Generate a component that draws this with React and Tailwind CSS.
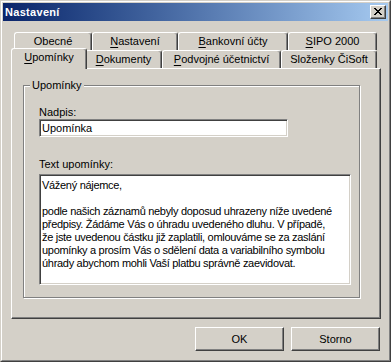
import clsx from 'clsx';

const backRow = [
  { label: 'Obecné', key: null, w: 'w-[78px]' },
  { label: 'Nastavení', key: 0, w: 'w-[86px]' },
  { label: 'Bankovní účty', key: 0, w: 'w-[110px]' },
  { label: 'SIPO 2000', key: 0, w: 'w-[89px]' },
];

const frontRow = [
  { label: 'Upomínky', key: 0, w: 'w-[76px]', selected: true },
  { label: 'Dokumenty', key: 0, w: 'w-[77px]' },
  { label: 'Podvojné účetnictví', key: 0, w: 'w-[119px]' },
  { label: 'Složenky ČiSoft', key: null, w: 'w-[96px]' },
];

const lines = [
  'Vážený nájemce,',
  '',
  'podle našich záznamů nebyly doposud uhrazeny níže uvedené',
  'předpisy. Žádáme Vás o úhradu uvedeného dluhu. V případě,',
  'že jste uvedenou částku již zaplatili, omlouváme se za zaslání',
  'upomínky a prosím Vás o sdělení data a variabilního symbolu',
  'úhrady abychom mohli Vaší platbu správně zaevidovat.',
];

// label with underlined access key
function Label({ text, k }) {
  if (k === null || k === undefined) return <span>{text}</span>;
  return (
    <span>
      {text.slice(0, k)}
      <span className="underline underline-offset-[2px]">{text[k]}</span>
      {text.slice(k + 1)}
    </span>
  );
}

function Tab({ tab }) {
  return (
    <div
      className={clsx(
        'flex shrink-0 items-center justify-center rounded-t-[3px] border-t border-l border-r border-t-white border-l-white border-r-[#404040] bg-[#d4d0c8] leading-[13px] shadow-[inset_-1px_0_0_#808080]',
        tab.w,
        tab.selected ? 'relative z-10 -mx-[2px] -mt-[2px] h-[21px] pb-[3px]' : 'h-[18px]'
      )}
    >
      <Label text={tab.label} k={tab.key} />
    </div>
  );
}

function Button({ children }) {
  return (
    <button className="flex h-[24px] w-[89px] items-center justify-center border border-t-white border-l-white border-r-[#404040] border-b-[#404040] bg-[#d4d0c8] leading-[13px] shadow-[inset_-1px_-1px_0_#808080]">
      {children}
    </button>
  );
}

export default function App() {
  return (
    <div className="h-[362px] w-[391px] bg-[#d4d0c8] font-['Liberation_Sans',Arial,sans-serif] text-[11px] text-black">
      {/* window frame */}
      <div className="h-full border border-t-[#d4d0c8] border-l-[#d4d0c8] border-r-[#404040] border-b-[#404040]">
        <div className="flex h-full flex-col border border-t-white border-l-white border-r-[#808080] border-b-[#808080] p-[1px]">
          {/* title bar */}
          <div className="flex h-[18px] shrink-0 items-center bg-linear-to-r from-[#0a246a] to-[#a6caf0] pl-[2px] pr-[2px]">
            <span className="flex-1 text-[11px] font-bold leading-[18px] tracking-[0.3px] text-white">Nastavení</span>
            <div className="flex h-[14px] w-[16px] items-center justify-center border border-t-white border-l-white border-r-[#404040] border-b-[#404040] bg-[#d4d0c8] shadow-[inset_-1px_-1px_0_#808080]">
              <svg width="8" height="7" viewBox="0 0 8 7" shapeRendering="crispEdges" className="-mt-[1px]">
                <path
                  fill="#000"
                  d="M0 0h2v1H0zM6 0h2v1H6zM1 1h2v1H1zM5 1h2v1H5zM2 2h4v1H2zM3 3h2v1H3zM2 4h4v1H2zM1 5h2v1H1zM5 5h2v1H5zM0 6h2v1H0zM6 6h2v1H6z"
                />
              </svg>
            </div>
          </div>

          {/* body */}
          <div className="flex flex-1 flex-col pl-[8px] pr-[7px] pt-[11px]">
            <div className="flex h-[36px] flex-col">
              <div className="flex h-[18px] pl-[3px]">
                {backRow.map((t) => (
                  <Tab key={t.label} tab={t} />
                ))}
              </div>
              <div className="flex h-[18px] items-start pl-[2px]">
                {frontRow.map((t) => (
                  <Tab key={t.label} tab={t} />
                ))}
              </div>
            </div>

            {/* tab panel */}
            <div className="h-[251px] w-[370px] border-t border-l border-r border-b border-t-white border-l-white border-r-[#404040] border-b-[#404040] pl-[11px] pt-[16px] shadow-[inset_-1px_-1px_0_#808080]">
              <div className="relative h-[213px] w-[337px] border border-[#808080] pl-[15px] pt-[20px] shadow-[inset_1px_1px_0_#fff,1px_1px_0_#fff]">
                <span className="absolute left-[6px] top-[-7px] bg-[#d4d0c8] px-[2px] leading-[13px]">Upomínky</span>

                <div className="h-[13px] leading-[13px]">Nadpis:</div>
                <div className="h-[18px] w-[249px] overflow-hidden border border-t-[#808080] border-l-[#808080] border-r-white border-b-white bg-white pl-[2px] pt-[2px] leading-[13px] shadow-[inset_1px_1px_0_#404040,inset_-1px_-1px_0_#d4d0c8]">
                  Upomínka
                </div>

                <div className="mt-[21px] h-[13px] leading-[13px]">Text upomínky:</div>
                <div className="mt-[3px] h-[111px] w-[312px] overflow-hidden border border-t-[#808080] border-l-[#808080] border-r-white border-b-white bg-white pl-[2px] pt-[4px] leading-[13px] tracking-[-0.3px] shadow-[inset_1px_1px_0_#404040,inset_-1px_-1px_0_#d4d0c8]">
                  {lines.map((l, i) => (
                    <div key={i} className="h-[13px] whitespace-nowrap">
                      {l}
                    </div>
                  ))}
                </div>
              </div>
            </div>

            <div className="mt-[8px] flex justify-end gap-[7px] pr-[1px]">
              <Button>OK</Button>
              <Button>Storno</Button>
            </div>
          </div>
        </div>
      </div>
    </div>
  );
}
